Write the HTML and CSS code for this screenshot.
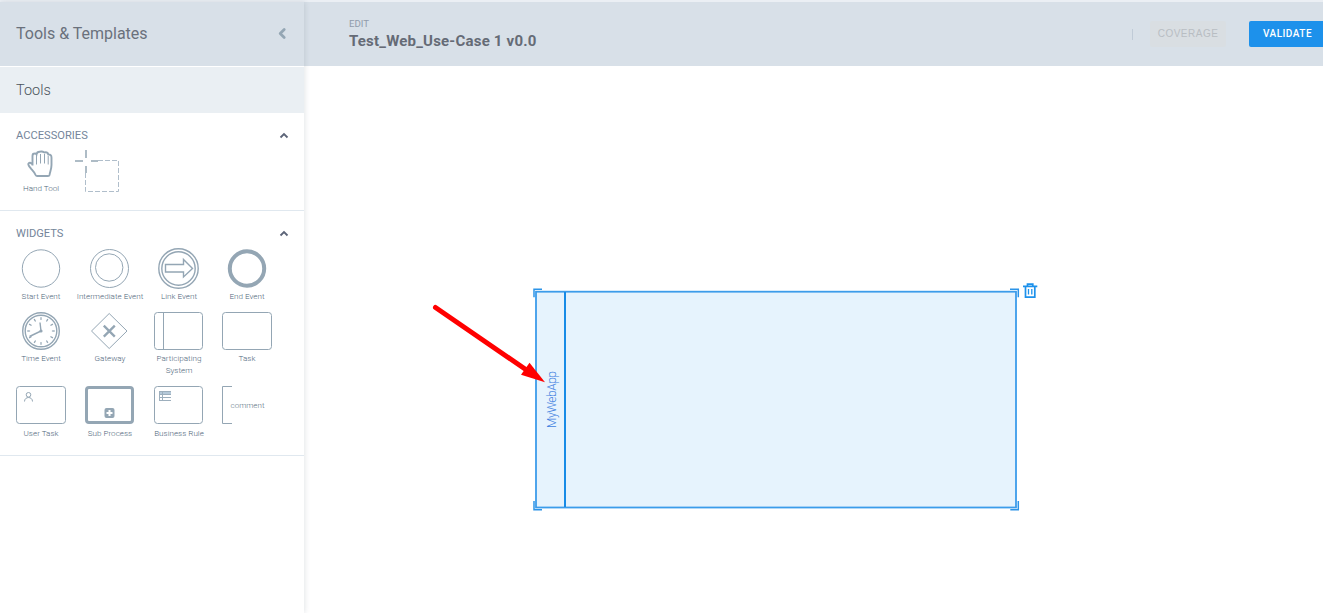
FILE: index.html
```html
<!DOCTYPE html>
<html lang="en">
<head>
<meta charset="utf-8">
<title>Tools &amp; Templates</title>
<link rel="stylesheet" href="styles.css">
</head>
<body>
<div class="app">
  <aside class="sidebar">
    <header class="side-head">
      <h1 class="side-title">Tools &amp; Templates</h1>
      <svg class="collapse" width="10" height="14" viewBox="0 0 10 14"><path d="M7.200 3.500 3.200 7.500l4 4"/></svg>
    </header>
    <h2 class="tools-head">Tools</h2>
    <section class="group accessories">
      <div class="group-head"><span>ACCESSORIES</span><svg class="chev" width="10" height="8" viewBox="0 0 10 8"><path d="M1.500 5.500 5 2 8.500 5.500"/></svg></div>
      <div class="grid">
        <div class="tool">
          <svg class="icon hand" width="50" height="34" viewBox="0 0 50 34"><path class="heavy" d="M16.500 18.500V9q0-2.500 2-2.500 1.500-.2 2 .8.500-2.800 3.500-2.600 2-.8 4.500.8 3-.8 3.800 2 3.200-.2 3.200 3.200V18c0 4-1.600 7-2 10q-.2 1-1.500 1H21q-1.200 0-1.700-1.500c-.8-2-2.300-3.500-4.300-5.800-1.300-1.700-3.300-3.500-2.600-5 .7-1.500 2.600-1.300 4.100.8"/><path class="thin" d="M20.500 8v9.500M24.500 7v9.500M28.500 7v9.500M32.200 9v8.500"/></svg>
          <span class="label">Hand Tool</span>
        </div>
        <div class="tool">
          <svg class="icon" width="50" height="46" viewBox="0 0 50 46"><path class="select" d="M11 4v8M11 20v7M0 15h8M16 15h7"/><path class="dash" d="M23 14.500h20.500v31H10.500V27"/></svg>
        </div>
      </div>
    </section>
    <section class="group widgets">
      <div class="group-head"><span>WIDGETS</span><svg class="chev" width="10" height="8" viewBox="0 0 10 8"><path d="M1.500 5.500 5 2 8.500 5.500"/></svg></div>
      <div class="grid">
        <div class="tool"><svg class="icon" width="50" height="42" viewBox="0 0 50 42"><circle cx="25" cy="20.500" r="18.700"/></svg><span class="label">Start Event</span></div>
        <div class="tool"><svg class="icon" width="50" height="42" viewBox="0 0 50 42"><circle cx="24.500" cy="20.500" r="19"/><circle cx="24.200" cy="19.500" r="13.700"/></svg><span class="label">Intermediate Event</span></div>
        <div class="tool"><svg class="icon" width="50" height="42" viewBox="0 0 50 42"><circle class="mid" cx="24.500" cy="20.500" r="19.700"/><circle class="mid" cx="24.500" cy="20.500" r="16.700"/><path class="mid" d="M11.500 16.500h18v-5l9 9-9 8.500v-5h-18z"/></svg><span class="label">Link Event</span></div>
        <div class="tool"><svg class="icon" width="50" height="42" viewBox="0 0 50 42"><circle class="ring" cx="25" cy="20.500" r="17.200"/></svg><span class="label">End Event</span></div>
        <div class="tool"><svg class="icon" width="50" height="42" viewBox="0 0 50 42"><circle class="mid" cx="25" cy="21" r="18.300"/><circle class="mid" cx="25" cy="21" r="15.800"/><circle class="ticks" cx="25" cy="21" r="12.300" pathLength="120"/><path class="mid" d="M24 12.500 25 21l-11.500 5.500"/><circle class="dot" cx="25" cy="21" r="1.600"/></svg><span class="label">Time Event</span></div>
        <div class="tool"><svg class="icon" width="50" height="42" viewBox="0 0 50 42"><path d="M24.200 3.500 42 21 24.200 38.500 6.500 21z"/><path class="cross" d="m18.800 15.600 11 11m0-11-11 11"/></svg><span class="label">Gateway</span></div>
        <div class="tool"><svg class="icon" width="50" height="42" viewBox="0 0 50 42"><rect x=".5" y="2.500" width="48" height="37" rx="3"/><path d="M9.500 2.500v37"/></svg><span class="label">Participating<br>System</span></div>
        <div class="tool"><svg class="icon" width="50" height="42" viewBox="0 0 50 42"><rect x=".5" y="2.500" width="49" height="37" rx="3"/></svg><span class="label">Task</span></div>
        <div class="tool"><svg class="icon" width="50" height="42" viewBox="0 0 50 42"><rect x=".5" y="2.500" width="49" height="37" rx="3"/><circle cx="12.500" cy="10.800" r="2.300"/><path d="M8.500 17.500c0-5.300 8-5.300 8 0"/></svg><span class="label">User Task</span></div>
        <div class="tool"><svg class="icon" width="50" height="42" viewBox="0 0 50 42"><rect class="thick" x="1.500" y="3.500" width="46" height="35" rx="2.500"/><rect class="solid" x="19.500" y="24" width="10" height="10" rx="2"/><path class="plus" d="M24.500 26v6M21.500 29h6"/></svg><span class="label">Sub Process</span></div>
        <div class="tool"><svg class="icon" width="50" height="42" viewBox="0 0 50 42"><rect x=".5" y="2.500" width="48" height="37" rx="3"/><path class="tint" d="M5 7h12v3.500H5z"/><path class="table" d="M5 7.500h12M5 10.500h12M5 13.500h12M5 16.500h12M5.500 7v10M8.500 7v10"/></svg><span class="label">Business Rule</span></div>
        <div class="tool"><svg class="icon" width="50" height="42" viewBox="0 0 50 42"><path d="M10 2.500H.5v37H10"/><text class="comment" x="8.500" y="24" textLength="34">comment</text></svg></div>
      </div>
    </section>
  </aside>
  <main class="main">
    <header class="topbar">
      <div class="doc">
        <div class="mode">EDIT</div>
        <div class="doc-title">Test_Web_Use-Case 1 v0.0</div>
      </div>
      <div class="actions">
        <span class="divider"></span>
        <button class="btn coverage">COVERAGE</button>
        <button class="btn validate">VALIDATE</button>
      </div>
    </header>
    <div class="canvas">
      <svg class="diagram" width="1019" height="547" viewBox="304 66 1019 547">
        <rect class="pool" x="536" y="291.700" width="480" height="215.800"/>
        <path class="lane" d="M565 292v215"/>
        <path class="corner" d="M542 289.300h-8v8M1010 289.300h8.300v8M534 501v8.700h8M1018.300 501v8.700h-8"/>
        <text class="pool-name" transform="translate(555.500 428) rotate(-90)" textLength="57">MyWebApp</text>
        <path class="trash" d="M1023 286.300h14.300M1027.500 286v-1.800h5.300v1.800M1025.500 287v10.200h9.300V287"/>
        <path class="trash-lines" d="M1028.500 289v5.500M1031.800 289v5.500"/>
        <path class="arrow-line" d="m435.500 307.500 91 62.500"/>
        <path class="arrow-head" d="m545 382.300-15.500-19.500-8.500 12z"/>
      </svg>
    </div>
  </main>
</div>
</body>
</html>
```

FILE: styles.css
```css
* { box-sizing: border-box; }
body { margin: 0; background: #fff; font-family: Roboto, "Liberation Sans", sans-serif; overflow: hidden; }
.app { display: flex; height: 613px; border-top: 2px solid #ebeff4; }
.sidebar { width: 304px; flex: none; background: #fff; box-shadow: 1px 0 5px rgba(60, 75, 90, .14); z-index: 1; }
.side-head { height: 64px; padding: 0 17px 2px 16px; background: #d8e0e8; display: flex; align-items: center; justify-content: space-between; }
.side-title { margin: 0; font-size: 16px; font-weight: 400; color: #6a717c; }
.collapse path { fill: none; stroke: #94a6b4; stroke-width: 2.800; stroke-linecap: round; stroke-linejoin: round; }
.tools-head { margin: 1px 0 0; height: 46px; padding: 1px 0 0 16px; background: #eaeff3; font-size: 14.500px; line-height: 46px; font-weight: 300; color: #4b535b; }
.group { border-bottom: 1px solid #e0e8ef; padding-top: 13px; }
.accessories { height: 98px; }
.widgets { height: 245px; }
.group-head { height: 19px; padding: 0 15px 0 16px; display: flex; align-items: center; justify-content: space-between; font-size: 11.150px; color: #74859a; }
.chev path { fill: none; stroke: #5c6478; stroke-width: 1.800; }
.grid { display: grid; grid-template-columns: 69px 69px 68px 68px; row-gap: 8px; padding-left: 7px; }
.accessories .grid { padding-top: 1px; }
.widgets .grid { padding-top: 5px; }
.tool { width: 68px; display: flex; flex-direction: column; align-items: center; }
.label { font-size: 8.100px; line-height: 12px; font-weight: 300; color: #4f677b; text-align: center; white-space: nowrap; }
.tool:nth-child(n+9) .label { padding-top: 1px; }
.icon { display: block; fill: none; stroke: #94a6b4; stroke-width: 1; overflow: visible; }
.hand { margin: 1px 0; }
.accessories .tool:nth-child(2) .icon { margin-left: -20px; }
.heavy { stroke-width: 1.900; }
.select { stroke-width: 1.500; }
.thin { stroke-width: 1; }
.mid { stroke-width: 1.400; }
.dash { stroke-dasharray: 5 2; stroke: #b0becb; }
.ring { stroke-width: 4; }
.ticks { stroke-width: 2.800; stroke-dasharray: 2 8; stroke-dashoffset: 1; }
.dot, .solid { fill: #94a6b4; stroke: none; }
.cross { stroke-width: 2.300; }
.thick { stroke-width: 3; }
.plus { stroke: #fff; stroke-width: 2; }
.tint { fill: #b5c9d9; stroke: none; }
.table { stroke: #9dafbd; }
.comment { font-size: 8px; font-weight: 300; fill: #5d7385; stroke: none; }
.main { flex: 1; min-width: 0; }
.topbar { height: 64px; background: #d8e0e8; display: flex; justify-content: space-between; align-items: flex-start; padding-left: 45px; }
.doc { padding-top: 16px; }
.mode { font-size: 9.700px; line-height: 12px; color: #919cab; }
.doc-title { font-size: 15px; letter-spacing: .2px; line-height: 18px; margin-top: 2px; font-weight: 700; color: #656b76; white-space: nowrap; }
.actions { display: flex; align-items: center; padding-top: 19px; }
.divider { width: 1px; height: 11px; background: #c0cbd7; margin-right: 17px; }
.btn { height: 26px; border: 0; padding: 0 0 1px; font: 500 10px Roboto, sans-serif; letter-spacing: .5px; border-radius: 2px; }
.coverage { width: 76px; margin-right: 23px; background: #d9dee2; color: #b8bdc2; font-weight: 400; font-family: "Liberation Sans", sans-serif; }
.validate { width: 74px; padding-left: 3px; background: #1d91eb; color: #fff; border-radius: 2px 0 0 2px; }
.diagram { display: block; }
.pool { fill: #e6f3fd; stroke: #3c9cea; stroke-width: 1.800; }
.lane { stroke: #188be6; stroke-width: 2; }
.corner { fill: none; stroke: #2c94e8; stroke-width: 1.500; }
.pool-name { font-size: 12px; font-weight: 300; fill: #3f7fe0; }
.trash { fill: none; stroke: #1d91eb; stroke-width: 1.700; }
.trash-lines { stroke: #1d91eb; stroke-width: 1.300; }
.arrow-line { stroke: #f00; stroke-width: 5; stroke-linecap: round; }
.arrow-head { fill: #f00; }
```
